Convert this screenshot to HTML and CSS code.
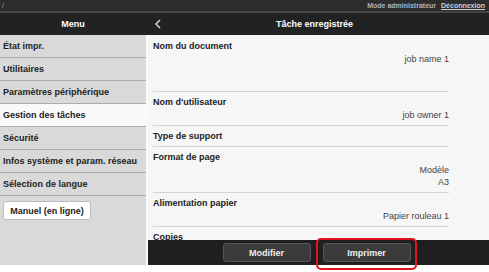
FILE: index.html
```html
<!DOCTYPE html>
<html lang="fr">
<head>
    <meta charset="UTF-8">
    <title>Tâche enregistrée</title>
    <link rel="stylesheet" href="styles.css">
</head>
<body>
    <div class="topbar">
        <span class="path">/</span>
        <span class="admin">Mode administrateur</span>
        <a class="logout" href="#">Déconnexion</a>
    </div>

    <div class="header">
        <div class="header-menu">Menu</div>
        <div class="header-main">
            <svg class="back" width="8" height="10" viewBox="0 0 8 10">
                <polyline points="6,1 2,5 6,9" fill="none" stroke="#cfcfcf" stroke-width="1.6"/>
            </svg>
            <span class="title">Tâche enregistrée</span>
        </div>
    </div>

    <div class="layout">
        <div class="sidebar">
            <div class="nav-item">État impr.</div>
            <div class="nav-item">Utilitaires</div>
            <div class="nav-item">Paramètres périphérique</div>
            <div class="nav-item active">Gestion des tâches</div>
            <div class="nav-item">Sécurité</div>
            <div class="nav-item">Infos système et param. réseau</div>
            <div class="nav-item">Sélection de langue</div>
            <button class="manual-btn">Manuel (en ligne)</button>
        </div>

        <div class="main">
            <div class="content">
                <div class="row row-tall">
                    <div class="label">Nom du document</div>
                    <div class="value">job name 1</div>
                </div>
                <div class="row">
                    <div class="label">Nom d'utilisateur</div>
                    <div class="value">job owner 1</div>
                </div>
                <div class="row">
                    <div class="label">Type de support</div>
                </div>
                <div class="row">
                    <div class="label">Format de page</div>
                    <div class="value">Modèle<br>A3</div>
                </div>
                <div class="row">
                    <div class="label">Alimentation papier</div>
                    <div class="value">Papier rouleau 1</div>
                </div>
                <div class="row">
                    <div class="label">Copies</div>
                </div>
            </div>
            <div class="actions">
                <button class="action-btn">Modifier</button>
                <button class="action-btn">Imprimer</button>
                <div class="highlight"></div>
            </div>
        </div>
    </div>
</body>
</html>
```

FILE: styles.css
```css
body {
    margin: 0;
    font-family: 'Liberation Sans', Arial, sans-serif;
    font-size: 9px;
    background: #fff;
    width: 489px;
    height: 272px;
    overflow: hidden;
}

.topbar {
    height: 11px;
    background: #2d2d2d;
    border-bottom: 2px solid #454545;
    display: flex;
    align-items: center;
    padding: 0 4px 0 2px;
    font-size: 7px;
    line-height: 11px;
}

.path {
    color: #aaa;
    flex: 1;
}

.admin {
    color: #a9b3c4;
    font-weight: bold;
    margin-right: 5px;
}

.logout {
    color: #c9d0da;
    font-weight: bold;
    text-decoration: underline;
}

.header {
    display: flex;
    height: 22px;
    background: #222;
    color: #fff;
    font-weight: bold;
}

.header-menu {
    width: 146px;
    text-align: center;
    line-height: 22px;
}

.header-main {
    flex: 1;
    display: flex;
    align-items: center;
    position: relative;
    padding-left: 8px;
}

.header-main .title {
    position: absolute;
    left: 0;
    right: 6px;
    text-align: center;
    line-height: 22px;
}

.layout {
    display: flex;
    height: 230px;
}

.sidebar {
    width: 146px;
    background: #d9d9d9;
}

.nav-item {
    height: 22px;
    line-height: 22px;
    padding-left: 3px;
    font-weight: bold;
    color: #222;
    border-bottom: 1px solid #ababab;
}

.nav-item.active {
    background: #fafafa;
}

.manual-btn {
    margin: 5px 0 0 3px;
    width: 88px;
    height: 19px;
    background: #fff;
    border: 1px solid #bdbdbd;
    border-radius: 3px;
    font-family: inherit;
    font-size: 9px;
    font-weight: bold;
    color: #222;
    padding: 0;
}

.main {
    flex: 1;
    display: flex;
    flex-direction: column;
    background: #f6f6f6;
    border-left: 2px solid #fbfbfb;
    position: relative;
}

.content {
    flex: 1;
    overflow: hidden;
    padding: 0 40px 0 5px;
}

.row {
    padding: 5px 0 4px;
    border-bottom: 1px solid #d4d4d4;
}

.row-tall {
    padding: 6px 0 26px;
}

.label {
    font-weight: bold;
    color: #222;
    line-height: 11px;
}

.value {
    margin-top: 1px;
    text-align: right;
    color: #444;
    line-height: 12px;
}

.actions {
    height: 25px;
    background: #1f1f1f;
    display: flex;
    justify-content: center;
    align-items: center;
    gap: 12px;
    padding-right: 4px;
}

.action-btn {
    width: 88px;
    height: 19px;
    background: #3b3b3b;
    border: 1px solid #575757;
    border-radius: 3px;
    color: #eee;
    font-family: inherit;
    font-size: 9px;
    font-weight: bold;
    padding: 0;
}

.highlight {
    position: absolute;
    left: 168px;
    top: 203px;
    width: 97px;
    height: 28px;
    border: 2px solid #e0141e;
    border-radius: 5px;
}
```
